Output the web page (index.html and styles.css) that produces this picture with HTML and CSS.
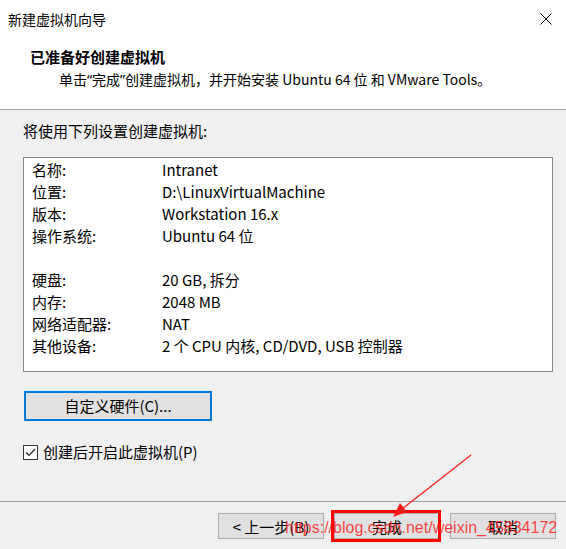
FILE: index.html
```html
<!doctype html>
<html>
<head>
	<meta charset="utf-8">
	<title>新建虚拟机向导</title>
	<link rel="stylesheet" href="styles.css">
</head>
<body>
	<div class="wizard">
		<div class="head">
			<div class="titlebar">
				<span class="title">新建虚拟机向导</span>
				<svg class="close" width="12" height="12" viewBox="0 0 12 12">
					<path d="M0.5 0.5 L11.5 11.5 M11.5 0.5 L0.5 11.5" stroke="#000" stroke-width="1" fill="none"/>
				</svg>
			</div>
			<h1 class="intro-title">已准备好创建虚拟机</h1>
			<p class="intro-text">单击<span class="q">“</span>完成<span class="q">”</span>创建虚拟机，并开始安装 Ubuntu 64 位 和 VMware Tools。</p>
		</div>

		<div class="body">
			<div class="lead">将使用下列设置创建虚拟机:</div>

			<div class="summary">
				<div class="row"><span>名称:</span><span>Intranet</span></div>
				<div class="row"><span>位置:</span><span>D:\LinuxVirtualMachine</span></div>
				<div class="row"><span>版本:</span><span>Workstation 16.x</span></div>
				<div class="row"><span>操作系统:</span><span>Ubuntu 64 位</span></div>
				<div class="row"></div>
				<div class="row"><span>硬盘:</span><span>20 GB, 拆分</span></div>
				<div class="row"><span>内存:</span><span>2048 MB</span></div>
				<div class="row"><span>网络适配器:</span><span>NAT</span></div>
				<div class="row"><span>其他设备:</span><span>2 个 CPU 内核, CD/DVD, USB 控制器</span></div>
			</div>

			<button class="btn btn-focus">自定义硬件(C)...</button>

			<label class="check">
				<svg class="box" width="15" height="15" viewBox="0 0 15 15">
					<rect x="0.5" y="0.5" width="14" height="14" fill="#fff" stroke="#333"/>
					<path d="M3 7.5 L6 10.5 L12 4" stroke="#222" stroke-width="1.2" fill="none"/>
				</svg>
				<span>创建后开启此虚拟机(P)</span>
			</label>
		</div>

		<div class="footer">
			<button class="btn">&lt; 上一步(B)</button>
			<button class="btn">完成</button>
			<button class="btn">取消</button>
		</div>

		<!-- annotations drawn on top of the screenshot -->
		<div class="mark"></div>
		<svg class="arrow" width="80" height="64" viewBox="0 0 80 64">
			<line x1="79" y1="1" x2="10" y2="55" stroke="#ff1a1a" stroke-width="1.2"/>
			<polygon points="1,63 8,49 15,58" fill="#ff1a1a"/>
		</svg>
		<div class="watermark">https://blog.csdn.net/weixin_45834172</div>
	</div>
</body>
</html>
```

FILE: styles.css
```css
* {
	box-sizing: border-box;
}

body {
	margin: 0;
	background: #f0f0f0;
}

.wizard {
	position: relative;
	width: 566px;
	height: 549px;
	background: #f0f0f0;
	font-family: "Noto Sans CJK SC", sans-serif;
	font-size: 15px;
	color: #000;
	overflow: hidden;
}

.head {
	height: 110px;
	background: #fff;
	border-bottom: 1px solid #a0a0a0;
}

.titlebar {
	height: 38px;
	padding: 0 14px 0 8px;
	display: flex;
	align-items: center;
	justify-content: space-between;
}

.title {
	font-size: 14px;
	line-height: 20px;
}

.close {
	display: block;
}

.intro-title {
	margin: 9px 0 0 30px;
	font-size: 15px;
	font-weight: bold;
	line-height: 20px;
}

.intro-text {
	margin: 2px 0 0 59px;
	font-size: 14px;
	line-height: 20px;
}

.q {
	font-family: "Noto Sans", sans-serif;
}

.body {
	padding: 11px 14px 0 23px;
	height: 391px;
	display: flex;
	flex-direction: column;
	align-items: flex-start;
}

.lead {
	line-height: 20px;
}

.summary {
	margin-top: 16px;
	width: 530px;
	height: 215px;
	padding: 1px 0 0 8px;
	background: #fff;
	border: 1px solid #828790;
}

.row {
	display: grid;
	grid-template-columns: 130px auto;
	height: 22px;
	line-height: 22px;
}

.btn {
	font: inherit;
	color: #000;
	background: #e1e1e1;
	border: 1px solid #adadad;
	width: 106px;
	height: 26px;
	padding: 2px 0 0;
	line-height: 22px;
}

.btn-focus {
	margin: 19px 0 0 1px;
	width: 188px;
	height: 30px;
	padding: 0;
	border: 2px solid #0078d7;
}

.check {
	margin-top: 21px;
	display: flex;
	align-items: center;
	gap: 5px;
	line-height: 20px;
}

.box {
	display: block;
}

.footer {
	border-top: 1px solid #a0a0a0;
	padding: 11px 10px 0 0;
	display: flex;
	justify-content: flex-end;
	gap: 10px;
}

.mark {
	position: absolute;
	left: 331px;
	top: 510px;
	width: 110px;
	height: 32px;
	border: 3px solid #ff0000;
}

.arrow {
	position: absolute;
	left: 392px;
	top: 454px;
}

.watermark {
	position: absolute;
	left: 285px;
	top: 518px;
	font-family: "Liberation Sans", sans-serif;
	font-size: 16px;
	line-height: 20px;
	color: rgba(255, 30, 30, 0.85);
	white-space: nowrap;
}
```
